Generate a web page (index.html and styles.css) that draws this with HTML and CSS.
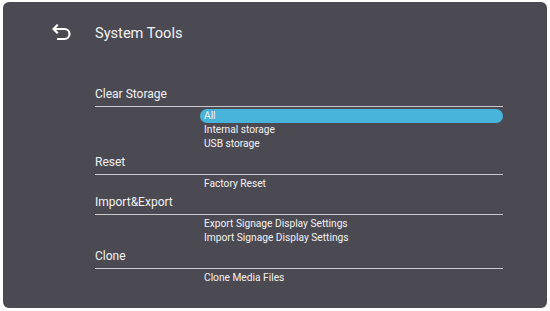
FILE: index.html
```html
<!DOCTYPE html>
<html>
<head>
<meta charset="utf-8">
<link rel="stylesheet" href="styles.css">
</head>
<body>
<div class="panel">
  <div class="title-row">
    <svg class="back" width="20" height="18" viewBox="0 0 20 18">
      <path d="M5 1.5 L1.5 5 L5 8.5" fill="none" stroke="#fff" stroke-width="2.2" stroke-linecap="square" stroke-linejoin="miter"/>
      <path d="M2 5 H12.5 A5 5 0 0 1 12.5 15 H5" fill="none" stroke="#fff" stroke-width="2.2"/>
    </svg>
    <span class="title">System Tools</span>
  </div>
  <div class="sections">
    <div class="section">
      <div class="head">Clear Storage</div>
      <ul class="items">
        <li class="sel">All</li>
        <li>Internal storage</li>
        <li>USB storage</li>
      </ul>
    </div>
    <div class="section">
      <div class="head">Reset</div>
      <ul class="items">
        <li>Factory Reset</li>
      </ul>
    </div>
    <div class="section">
      <div class="head">Import&amp;Export</div>
      <ul class="items">
        <li>Export Signage Display Settings</li>
        <li>Import Signage Display Settings</li>
      </ul>
    </div>
    <div class="section">
      <div class="head">Clone</div>
      <ul class="items">
        <li>Clone Media Files</li>
      </ul>
    </div>
  </div>
</div>
</body>
</html>
```
FILE: styles.css
```css
html, body {
  margin: 0;
  padding: 0;
  background: #ffffff;
}
body {
  width: 550px;
  height: 311px;
  overflow: hidden;
  font-family: Roboto, "Liberation Sans", sans-serif;
  color: #f2f2f4;
}
.panel {
  margin: 2px 3px 0 3px;
  height: 306px;
  box-sizing: border-box;
  background: #4b4a52;
  border-radius: 6px;
  padding-top: 21px;
}
.title-row {
  display: flex;
  align-items: center;
  height: 20px;
  padding-left: 49px;
}
.back {
  display: block;
  margin-right: 23px;
}
.title {
  font-size: 14.6px;
  line-height: 20px;
}
.sections {
  margin: 40px 44px 0 92px;
}
.head {
  height: 24px;
  box-sizing: border-box;
  border-bottom: 1px solid #c9c9cd;
  font-size: 12px;
  line-height: 16px;
  padding-top: 3px;
}
.items {
  list-style: none;
  margin: 0;
  padding: 2px 0 0 105px;
}
.items li {
  height: 14px;
  line-height: 14px;
  font-size: 10.2px;
  padding-left: 4px;
  border-radius: 7px;
}
.items li.sel {
  background: #48b4dc;
}
```
